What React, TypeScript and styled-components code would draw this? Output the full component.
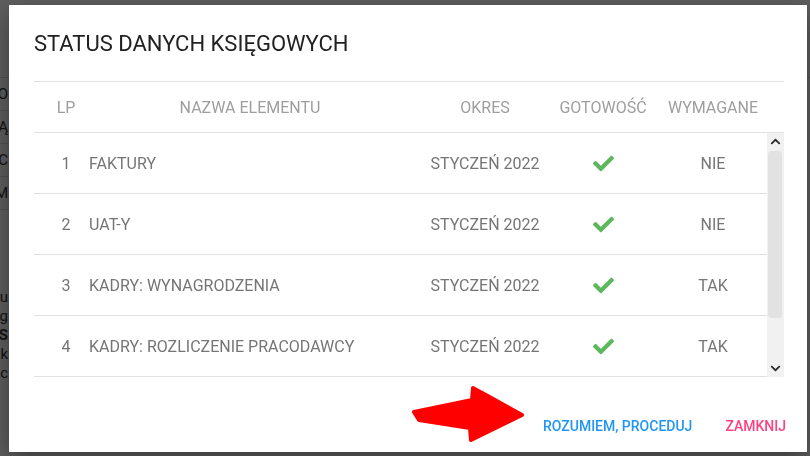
import React from 'react';
import styled, { createGlobalStyle } from 'styled-components';
import { FaCheck, FaChevronUp, FaChevronDown } from 'react-icons/fa';

const GlobalStyle = createGlobalStyle`
    html, body {
        margin: 0;
        padding: 0;
        width: 810px;
        height: 456px;
        overflow: hidden;
        background: #fff;
        font-family: Roboto, "Noto Sans", Arial, sans-serif;
    }
`;

// the page under the dialog, only a sliver of it shows on the left
const Page = styled.div`
    width: 810px;
    height: 456px;
    background: #fff;
    color: #333;
    font-size: 15px;
`;

const PageHead = styled.div`
    height: 77px;
    border-bottom: 1px solid #ddd;
`;

const PageRow = styled.div`
    height: 32px;
    width: 8px;
    overflow: hidden;
    display: flex;
    justify-content: flex-end;
    align-items: center;
    white-space: nowrap;
    border-bottom: 1px solid #ddd;
`;

const PageText = styled.div`
    margin-top: 78px;
    width: 8px;
    overflow: hidden;
    display: flex;
    flex-direction: column;
    align-items: flex-end;
    white-space: nowrap;
    line-height: 19px;
    font-size: 15px;
`;

const PageLine = styled.span<{ $bold?: boolean }>`
    font-weight: ${({ $bold }) => ($bold ? 700 : 400)};
`;

const Overlay = styled.div`
    position: fixed;
    inset: 0;
    background: rgba(0, 0, 0, 0.63);
    padding: 5px 3px 4px 9px;
    box-sizing: border-box;
    display: flex;
`;

const Dialog = styled.div`
    position: relative;
    flex: 1;
    background: #fff;
    box-shadow: 0 8px 24px rgba(0, 0, 0, 0.4);
    padding: 26px 23px 0 25px;
    box-sizing: border-box;
    display: flex;
    flex-direction: column;
`;

const Title = styled.h2`
    margin: 0 0 24px;
    font-size: 22px;
    line-height: 26px;
    font-weight: 400;
    color: #212121;
`;

const HeadRow = styled.div`
    display: grid;
    grid-template-columns: 48px 336px 134px 102px 118px;
    height: 50px;
    border-top: 1px solid #e0e0e0;
    border-bottom: 1px solid #e0e0e0;
    align-items: center;
    color: #9e9e9e;
    font-size: 16px;
`;

const HeadCell = styled.div<{ $first?: boolean }>`
    text-align: center;
    padding-left: ${({ $first }) => ($first ? '16px' : '0')};
`;

const BodyWrap = styled.div`
    display: flex;
    height: 244px;
`;

const Body = styled.div`
    flex: 1;
    overflow: hidden;
`;

const Row = styled.div`
    display: grid;
    grid-template-columns: 48px 336px 134px 102px 1fr;
    height: 60px;
    border-bottom: 1px solid #e0e0e0;
    align-items: center;
    color: #757575;
    font-size: 16px;
`;

const Cell = styled.div<{ $align?: 'left' | 'center'; $pl?: number }>`
    padding-left: ${({ $pl }) => $pl || 0}px;
    display: flex;
    justify-content: ${({ $align }) => ($align === 'left' ? 'flex-start' : 'center')};
`;

const ScrollTrack = styled.div`
    width: 17px;
    background: #f1f1f1;
    display: flex;
    flex-direction: column;
`;

const ScrollArrow = styled.div`
    height: 17px;
    display: flex;
    align-items: center;
    justify-content: center;
    color: #2b2b2b;
    background: #f1f1f1;
`;

const ScrollThumb = styled.div`
    height: 167px;
    margin: 1px 2px 0 1px;
    background: #e2e2e2;
    border-radius: 4px;
`;

const ScrollSpace = styled.div`
    flex: 1;
`;

const Footer = styled.div`
    flex: 1;
    display: flex;
    justify-content: flex-end;
    align-items: center;
    gap: 17px;
    padding-top: 22px;
    margin-right: -10px;
`;

const FlatButton = styled.button<{ $color: string }>`
    border: none;
    background: transparent;
    font-family: inherit;
    font-size: 14px;
    font-weight: 500;
    color: ${({ $color }) => $color};
    padding: 0 8px;
    height: 36px;
    cursor: pointer;
`;

const Arrow = styled.svg`
    position: absolute;
    left: 386px;
    top: 373px;
`;

interface Item {
    name: string;
    period: string;
    ready: boolean;
    required: boolean;
}

const items: Item[] = [
    { name: 'FAKTURY', period: 'STYCZEŃ 2022', ready: true, required: false },
    { name: 'UAT-Y', period: 'STYCZEŃ 2022', ready: true, required: false },
    { name: 'KADRY: WYNAGRODZENIA', period: 'STYCZEŃ 2022', ready: true, required: true },
    { name: 'KADRY: ROZLICZENIE PRACODAWCY', period: 'STYCZEŃ 2022', ready: true, required: true },
    { name: 'DEKLARACJE PODATKOWE', period: 'STYCZEŃ 2022', ready: true, required: true },
];

const App = () => (
    <>
        <GlobalStyle />
        <Page>
            <PageHead />
            <PageRow>RO</PageRow>
            <PageRow>DĄ</PageRow>
            <PageRow>Y C</PageRow>
            <PageRow>EM</PageRow>
            <PageText>
                <PageLine>nu</PageLine>
                <PageLine>og</PageLine>
                <PageLine $bold>ES</PageLine>
                <PageLine>atk</PageLine>
                <PageLine>ic</PageLine>
            </PageText>
        </Page>
        <Overlay>
            <Dialog>
                <Title>STATUS DANYCH KSIĘGOWYCH</Title>
                <HeadRow>
                    <HeadCell $first>LP</HeadCell>
                    <HeadCell>NAZWA ELEMENTU</HeadCell>
                    <HeadCell>OKRES</HeadCell>
                    <HeadCell>GOTOWOŚĆ</HeadCell>
                    <HeadCell>WYMAGANE</HeadCell>
                </HeadRow>
                <BodyWrap>
                    <Body>
                        {items.map((item, index) => (
                            <Row key={index}>
                                <Cell $pl={16}>{index + 1}</Cell>
                                <Cell $align="left" $pl={7}>{item.name}</Cell>
                                <Cell>{item.period}</Cell>
                                <Cell>{item.ready && <FaCheck size={21} color="#5cb85c" />}</Cell>
                                <Cell $pl={5}>{item.required ? 'TAK' : 'NIE'}</Cell>
                            </Row>
                        ))}
                    </Body>
                    <ScrollTrack>
                        <ScrollArrow><FaChevronUp size={11} /></ScrollArrow>
                        <ScrollThumb />
                        <ScrollSpace />
                        <ScrollArrow><FaChevronDown size={11} /></ScrollArrow>
                    </ScrollTrack>
                </BodyWrap>
                <Footer>
                    <FlatButton $color="#2196f3">ROZUMIEM, PROCEDUJ</FlatButton>
                    <FlatButton $color="#ff4081">ZAMKNIJ</FlatButton>
                </Footer>
                <Arrow width="140" height="70" viewBox="395 378 140 70">
                    <path
                        d="M414 412 L472 400 L473 388 L522 415 L471 440 L470 428 L419 420 Z"
                        fill="#ff0000"
                        stroke="#ff0000"
                        strokeWidth="4"
                        strokeLinejoin="round"
                    />
                </Arrow>
            </Dialog>
        </Overlay>
    </>
);

export default App;
